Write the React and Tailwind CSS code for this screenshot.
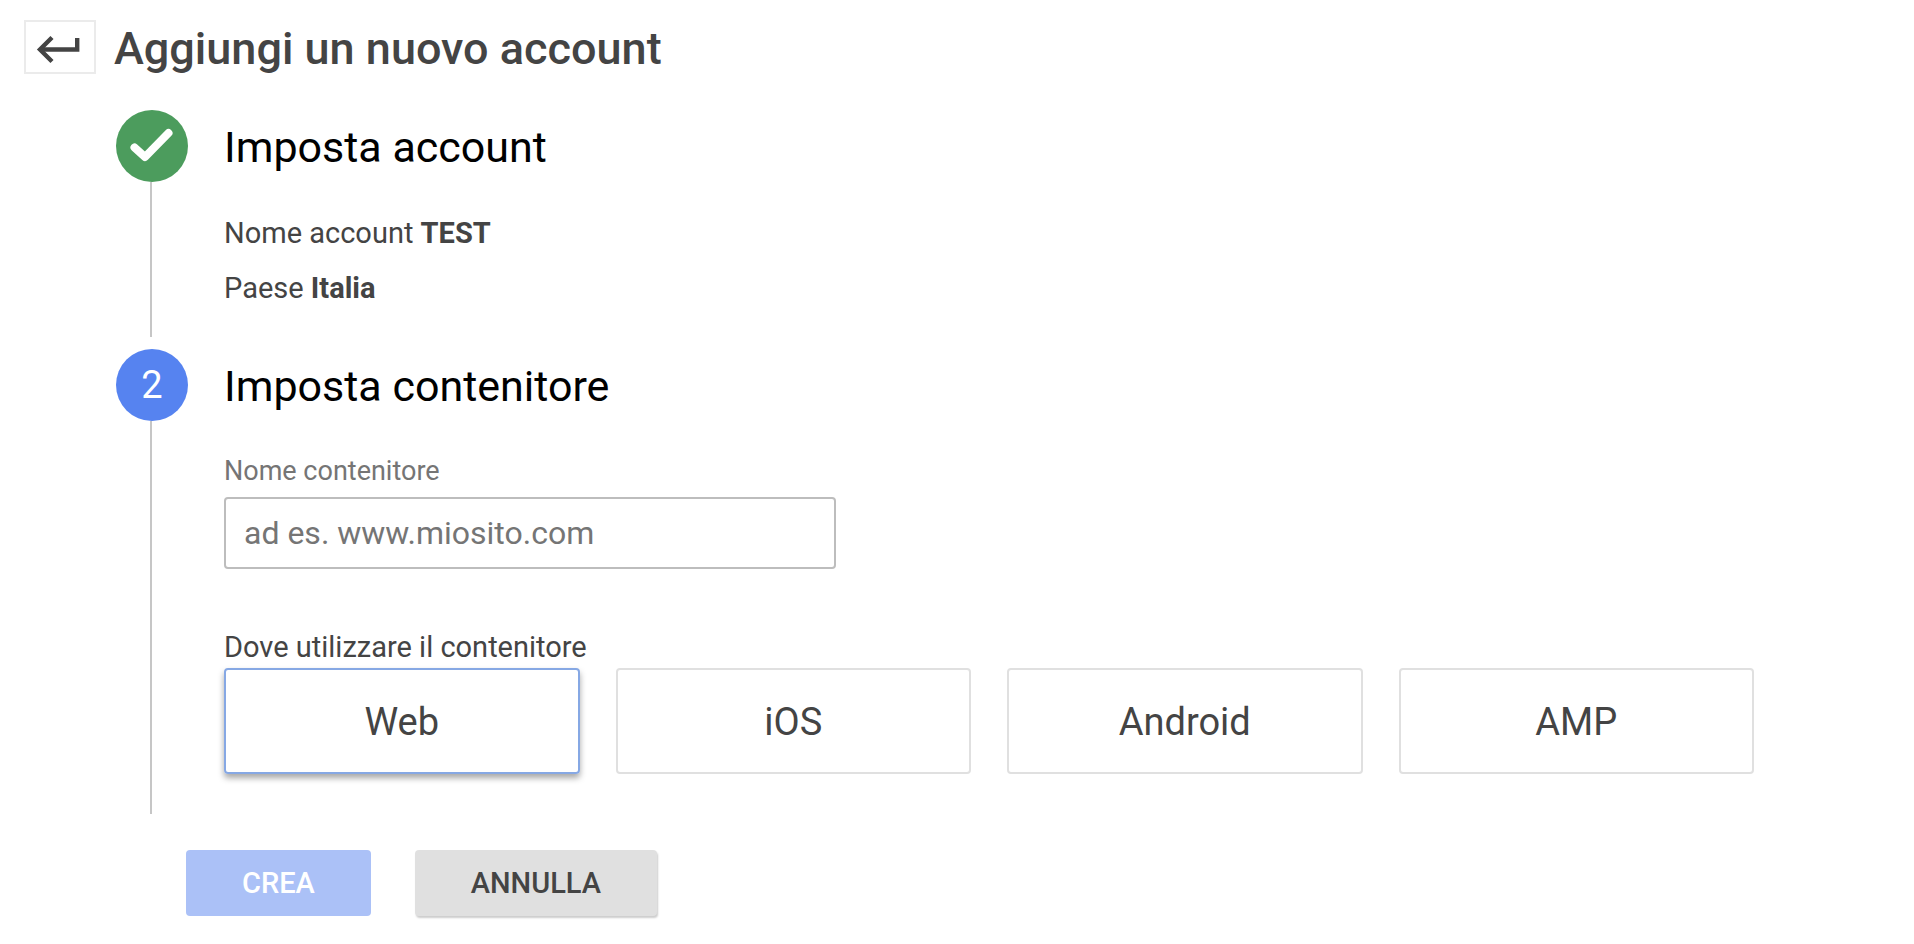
import React, { useState } from "react";

const platforms = ["Web", "iOS", "Android", "AMP"];

function Step({ badge, badgeColor, title, className, children }) {
  return (
    <li className="flex gap-9">
      <div className="flex w-[72px] shrink-0 flex-col items-center">
        <div className={"flex size-[72px] items-center justify-center rounded-full text-[38px] text-white " + badgeColor}>
          {badge}
        </div>
        <div className="mr-0.5 w-0.5 grow bg-[#c6c6c6]" />
      </div>
      <div className={"min-w-0 grow " + className}>
        <h2 className="text-[43px] leading-[74px] text-black">{title}</h2>
        {children}
      </div>
    </li>
  );
}

function CheckIcon() {
  return (
    <svg className="size-[72px]" viewBox="0 0 72 72" fill="none" stroke="white" strokeWidth="8" aria-hidden="true">
      <path d="M18.5 37.5 L29 47 L52.5 23" strokeLinecap="round" strokeLinejoin="round" />
    </svg>
  );
}

function BackIcon() {
  return (
    <svg className="h-[50px] w-[68px]" viewBox="0 0 68 50" fill="none" stroke="#444" strokeWidth="4.4" aria-hidden="true">
      <path d="M26 15.5 L14 27.5 L26 39.5" />
      <path d="M14 27.5 H51.2 V16" />
    </svg>
  );
}

function App() {
  const [name, setName] = useState("");
  const [platform, setPlatform] = useState("Web");

  return (
    <div className="min-h-screen bg-white pb-6 font-['Roboto',sans-serif] text-[#444]">
      <header className="flex items-start gap-[18px] px-6 pt-5">
        <button type="button" aria-label="Indietro" className="flex h-[54px] w-[72px] items-center justify-center border-2 border-[#ebebeb]">
          <BackIcon />
        </button>
        <h1 className="text-[45px] leading-[58px] font-medium">Aggiungi un nuovo account</h1>
      </header>

      <main className="pt-8 pr-40 pl-[116px]">
        <ol className="flex flex-col gap-3">
          <Step badge={<CheckIcon />} badgeColor="bg-[#4c9c5d]" title="Imposta account" className="pb-[21px]">
            <div className="mt-[22px] text-[29px] leading-[55px]">
              <p>Nome account <b>TEST</b></p>
              <p>Paese <b>Italia</b></p>
            </div>
          </Step>

          <Step badge="2" badgeColor="bg-[#5683f0]" title="Imposta contenitore" className="pb-10">
            <label htmlFor="container-name" className="mt-8 block text-[27px] leading-8 text-[#757575]">
              Nome contenitore
            </label>
            <input
              id="container-name"
              type="text"
              value={name}
              onChange={(e) => setName(e.target.value)}
              placeholder="ad es. www.miosito.com"
              className="mt-[10px] block h-[72px] w-full max-w-[612px] rounded border-2 border-[#bdbdbd] px-[18px] text-[32px] placeholder:text-[#757575]"
            />

            <p id="platform-label" className="mt-[58px] text-[29px] leading-[41px]">Dove utilizzare il contenitore</p>
            <div role="group" aria-labelledby="platform-label" className="grid grid-cols-4 gap-9">
              {platforms.map((p) => (
                <button
                  key={p}
                  type="button"
                  aria-pressed={platform === p}
                  onClick={() => setPlatform(p)}
                  className={
                    "h-[106px] rounded border-2 pt-0.5 text-[38px] " +
                    (platform === p ? "border-[#86a8e4] shadow-[0_4px_6px_rgba(0,0,0,0.35)]" : "border-[#e0e0e0]")
                  }
                >
                  {p}
                </button>
              ))}
            </div>
          </Step>
        </ol>

        <div className="mt-9 flex gap-11 pl-[70px] text-[29px] font-medium">
          <button type="button" className="h-[66px] rounded bg-[#abc1f7] px-14 pt-0.5 text-white">CREA</button>
          <button type="button" className="h-[66px] rounded bg-[#e0e0e0] px-14 pt-0.5 shadow-[1px_2px_2px_rgba(0,0,0,0.2)]">ANNULLA</button>
        </div>
      </main>
    </div>
  );
}

export default App;
